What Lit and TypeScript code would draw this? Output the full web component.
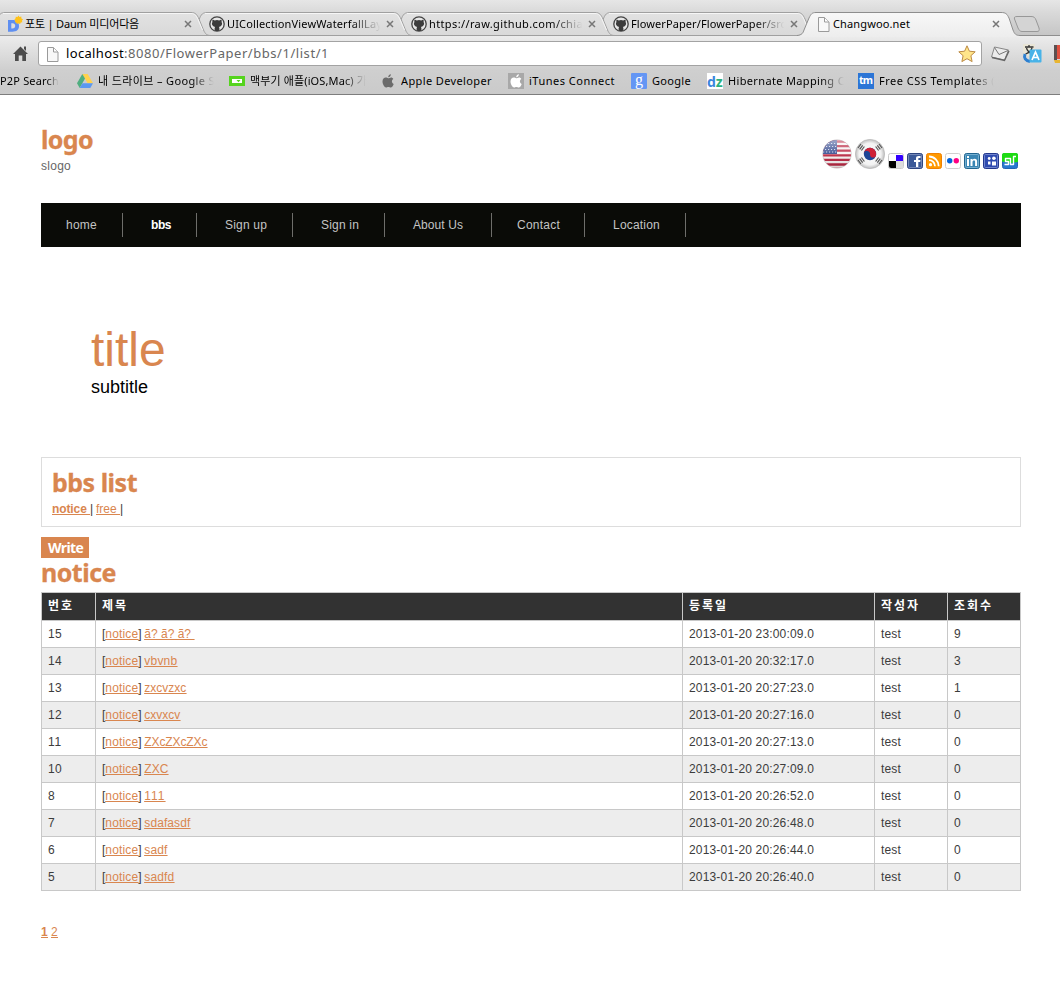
import { LitElement, html, css, svg, nothing } from "lit";
import { customElement, property } from "lit/decorators.js";
import { classMap } from "lit/directives/class-map.js";

/** A run of text tracked so that it fills the given advance width. */
@customElement("fit-text")
class FitText extends LitElement {
  @property({ type: Number }) w = 0;
  @property() text = "";
  static styles = css`
    :host { display: inline-block; white-space: pre; text-decoration: inherit; }
    span { text-decoration: inherit; }
  `;
  firstUpdated() {
    const span = this.renderRoot.querySelector("span")!;
    const natural = span.getBoundingClientRect().width;
    const n = [...this.text].length;
    if (this.w && n) {
      span.style.letterSpacing = `${(this.w - natural) / n}px`;
      this.style.width = `${this.w}px`;
    }
  }
  render() {
    return html`<span>${this.text}</span>`;
  }
}

const t = (text: string, w: number) => html`<fit-text .text=${text} .w=${w}></fit-text>`;

const octocat = svg`<circle cx="8" cy="8" r="7.2" fill="#e6e6e6" stroke="#444" stroke-width="1.3"/>
  <path fill="#3c3c3c" d="M3.6 3.4 5.8 4.4Q8 3.8 10.2 4.4L12.4 3.4Q12.9 4.8 12.6 5.9 13.5 7.3 12.8 9 12 10.7 9.9 10.9 10.4 11.5 10.4 12.4V14.6Q8 15.6 5.6 14.6V12.4Q5.6 11.5 6.1 10.9 4 10.7 3.2 9 2.5 7.3 3.4 5.9 3.1 4.8 3.6 3.4Z"/>`;
const page = svg`<path d="M2.5 1.500h6l4.500 4.500v9.500H2.500z" fill="#f8f8f8" stroke="#9a9a9a"/><path d="M8.500 1.800v4.200h4.300" fill="#fff" stroke="#9a9a9a"/>`;
const apple = svg`<path d="M10.900 1.200c.1 1.500-1.200 3-2.700 3-.1-1.500 1.200-2.900 2.700-3zM13.300 5.900c-2.100 1.300-1.700 4 .4 5-.6 1.700-1.700 3.500-3 3.500-.9 0-1.200-.5-2.300-.5s-1.500.5-2.300.5c-1.600 0-3.600-3.300-3.600-6 0-2.500 1.600-3.900 3.200-3.900 1.100 0 1.900.7 2.600.7s1.600-.8 2.900-.8c.8 0 1.600.5 2.100 1.500z"/>`;

const icons: Record<string, unknown> = {
  daum: svg`<path d="M1 4h4.500c4 0 6.500 2 6.500 6s-2.500 5.700-6.500 5.700H1zM4.300 7.200v5.200h1.200c1.700 0 2.700-.9 2.700-2.600s-1-2.600-2.700-2.600z" fill="#5f8ff0" fill-rule="evenodd"/><path d="m11.500-.5 1 1.500 1.800-.4.1 1.800 1.600.8-1 1.500.3 1.500-1.500.3-.8 1.400-1.500-.7-1.600.8-.7-1.500-1.300-.2.300-1.500-.8-1.400 1.200-1.100.2-1.600 1.600.3z" fill="#ffc21a"/>`,
  octocat,
  page,
  drive: svg`<path d="M5.300 1h5.400L16 10.300h-5.400z" fill="#ffd24d"/><path d="M5.300 1 8 5.600 2.700 15 0 10.300z" fill="#4fae7f"/><path d="M5.400 10.300H16L13.300 15H2.700z" fill="#5b98f0"/>`,
  naver: svg`<path d="M0 3h16v10H0z" fill="#55d41e"/><path d="M3 6h10v4H3z" fill="#fff"/><path d="M7.500 7h4L9.500 9.200z" fill="#55d41e"/>`,
  apple: svg`<g fill="#6b6b6b">${apple}</g>`,
  itunes: svg`<path d="M0 0h16v16H0z" fill="#a8a8a8"/><g fill="#fff">${apple}</g>`,
  google: svg`<rect width="16" height="16" rx="1" fill="#6496f4"/><text x="8" y="11.500" text-anchor="middle" font-family="Liberation Serif, serif" font-size="16" fill="#fff">g</text>`,
  dz: svg`<path d="M0 0h16v16H0z" fill="#fff"/><text x="0" y="14" font-family="Noto Sans, sans-serif" font-weight="700" font-size="14" fill="#3b86dd">d</text><text x="8.700" y="14" font-family="Noto Sans, sans-serif" font-weight="700" font-size="14" fill="#2bb17d">z</text>`,
  tm: svg`<path d="M0 0h16v16H0z" fill="#2b75d6"/><text x="8" y="11" text-anchor="middle" textLength="14" font-family="Noto Sans, sans-serif" font-weight="700" font-size="10.500" fill="#fff">tm</text>`,
  delicious: svg`<rect x=".5" y=".5" width="15" height="15" rx="2" fill="#fff" stroke="#c9c9c9"/><path d="M8 2h6q1 0 1 1v5H8z" fill="#3300ff"/><path d="M1 8h7v7H3q-2 0-2-2z" fill="#000"/><path d="M8 8h7v7H8z" fill="#ddd"/>`,
  facebook: svg`<rect x=".5" y=".5" width="15" height="15" rx="2" fill="#3b5998" stroke="#2d4580"/><rect x="1.500" y="1.500" width="13" height="13" rx="1" fill="none" stroke="#7488b8"/><path d="M9 14V9H7V7h2V5.500C9 3.700 10 3 11.500 3H13.500v2h-1.200c-.8 0-1 .3-1 1v1h2.200l-.3 2h-1.900v5z" fill="#fff"/>`,
  rss: svg`<rect x=".5" y=".5" width="15" height="15" rx="2" fill="#ff9900" stroke="#f08000"/><circle cx="4.500" cy="11.700" r="1.600" fill="#fff"/><path d="M3 7.200a6 6 0 0 1 6 6M3 3.500a9.700 9.700 0 0 1 9.700 9.700" stroke="#fff" stroke-width="1.800" fill="none"/>`,
  flickr: svg`<rect x=".5" y=".5" width="15" height="15" rx="2" fill="#fff" stroke="#cfcfcf"/><circle cx="4.700" cy="7.700" r="2.700" fill="#0063dc"/><circle cx="11.300" cy="7.700" r="2.700" fill="#ff0084"/>`,
  linkedin: svg`<rect x=".5" y=".5" width="15" height="15" rx="2" fill="#3a86b4" stroke="#216590"/><rect x="1.500" y="1.500" width="13" height="13" rx="1" fill="none" stroke="#75afd0"/><path d="M3 6h2v7H3zM3 3h2v2H3zM6.500 6h2v1c.5-.8 1.300-1.200 2.200-1.200 1.700 0 2.400 1 2.400 2.700V13h-2V9c0-.9-.3-1.400-1.100-1.400-1 0-1.500.6-1.500 1.600V13h-2z" fill="#fff"/>`,
  myspace: svg`<rect x=".5" y=".5" width="15" height="15" rx="2" fill="#2f4bb0" stroke="#22378c"/><rect x="1.500" y="1.500" width="13" height="13" rx="1" fill="none" stroke="#7084cc"/><g fill="#fff"><circle cx="6.200" cy="5.500" r="1.400"/><circle cx="10.900" cy="5.200" r="1.800"/><path d="M5 8.500h2.500v3H5zM9 8.500h4v4H9z"/></g>`,
  stumble: svg`<rect x=".5" y=".5" width="15" height="15" rx="2" fill="#2878d0" stroke="#2465b5"/><path d="M2 0h12q2 0 2 2v7L9 10 0 8.500V2q0-2 2-2z" fill="#1ddb12"/><path d="M2.500 11.500H6.500V8.500H3.500V5.500H8.500V11.500H11.500V3.500H14" fill="none" stroke="#fff" stroke-width="1.400" stroke-linejoin="round"/>`,
};

const icon = (name: string, size = 16) =>
  html`<svg class="icon" width=${size} height=${size} viewBox="0 0 16 16">${icons[name]}</svg>`;

interface Tab { icon: string; title: string; w: number; fade?: boolean }
const tabs: Tab[] = [
  { icon: "daum", title: "포토 | Daum 미디어다음", w: 114 },
  { icon: "octocat", title: "UICollectionViewWaterfallLay", w: 155, fade: true },
  { icon: "octocat", title: "https://raw.github.com/chia", w: 154, fade: true },
  { icon: "octocat", title: "FlowerPaper/FlowerPaper/src", w: 155, fade: true },
  { icon: "page", title: "Changwoo.net", w: 77 },
];

interface Bookmark { icon: string; title: string; w: number; cell: number; fade?: boolean }
const bookmarks: Bookmark[] = [
  { icon: "", title: "P2P Search", w: 59, cell: 77, fade: true },
  { icon: "drive", title: "내 드라이브 – Google S", w: 117, cell: 152, fade: true },
  { icon: "naver", title: "맥부기 애플(iOS,Mac) 가", w: 117, cell: 151, fade: true },
  { icon: "apple", title: "Apple Developer", w: 91, cell: 128 },
  { icon: "itunes", title: "iTunes Connect", w: 86, cell: 123 },
  { icon: "google", title: "Google", w: 39, cell: 76 },
  { icon: "dz", title: "Hibernate Mapping C", w: 117, cell: 151, fade: true },
  { icon: "tm", title: "Free CSS Templates (", w: 116, cell: 151, fade: true },
];

const menu = [
  { label: "home", w: 31, cell: 82, pad: 25 },
  { label: "bbs", w: 20, cell: 74, pad: 28, active: true },
  { label: "Sign up", w: 42, cell: 96, pad: 28 },
  { label: "Sign in", w: 38, cell: 92, pad: 28 },
  { label: "About Us", w: 50, cell: 107, pad: 28 },
  { label: "Contact", w: 43, cell: 93, pad: 25 },
  { label: "Location", w: 47, cell: 101, pad: 28 },
];

const rows: [string, string, number, string, string][] = [
  ["15", "ã? ã? ã? ", 50, "23:00:09", "9"],
  ["14", "vbvnb", 33, "20:32:17", "3"],
  ["13", "zxcvzxc", 42, "20:27:23", "1"],
  ["12", "cxvxcv", 36, "20:27:16", "0"],
  ["11", "ZXcZXcZXc", 63, "20:27:13", "0"],
  ["10", "ZXC", 24, "20:27:09", "0"],
  ["8", "111", 21, "20:26:52", "0"],
  ["7", "sdafasdf", 46, "20:26:48", "0"],
  ["6", "sadf", 23, "20:26:44", "0"],
  ["5", "sadfd", 30, "20:26:40", "0"],
];

@customElement("browser-chrome")
class BrowserChrome extends LitElement {
  static styles = css`
    :host {
      display: block; height: 95px; box-sizing: border-box; overflow: hidden;
      border-bottom: 1px solid #7d7d7d; color: #000;
      font: 11px "Noto Sans", "Noto Sans CJK KR", sans-serif;
      background: linear-gradient(#f4f4f4 12px, #ececec 36px, #cfcfcf 70px, #cacaca 94px);
    }
    svg { display: block; flex: none; overflow: visible; }
    .strip { display: grid; height: 36px; }
    .strip > * { grid-area: 1 / 1; }
    .tabs { display: flex; padding-top: 15px; }
    .tab { display: flex; box-sizing: border-box; width: 202px; flex: none; padding-left: 7px; height: 18px; align-items: center; }
    .tab.active { padding-left: 8px; }
    .title { width: 155px; margin-left: 2px; line-height: 18px; overflow: hidden; white-space: nowrap; }
    .tab.active .title { margin-left: 1px; }
    .fade { mask-image: linear-gradient(90deg, #000 80%, transparent 99%); }
    .close { margin-left: 3px; }
    .bar { display: flex; height: 33px; box-sizing: border-box; align-items: center; padding: 2px 0 0 12px; }
    .omni {
      display: flex; flex: none; align-items: center; box-sizing: border-box; width: 944px; height: 25px; margin-left: 9px;
      background: #fff; border: 1px solid #a3a3a3; border-radius: 3px; padding: 0 5px 0 6px;
    }
    .url { flex: 1; margin-left: 5px; font-size: 13px; line-height: 23px; color: #666; white-space: nowrap; }
    .host { color: #000; }
    .ext { margin-left: 8px; }
    .ext + .ext { margin-left: 12px; }
    .marks { display: flex; height: 24px; align-items: center; }
    .mark { display: flex; align-items: center; flex: none; box-sizing: border-box; line-height: 20px; }
    .mark .icon { margin-right: 5px; }
    .label { overflow: hidden; white-space: nowrap; }
  `;
  render() {
    return html`
      <div class="strip">
        <svg width="1060" height="36">
          <defs>
            <linearGradient id="s" x2="0" y2="1"><stop stop-color="#e6e6e6"/><stop offset=".35" stop-color="#d9d9d9"/><stop offset="1" stop-color="#c5c5c5"/></linearGradient>
            <linearGradient id="i" x2="0" y2="1"><stop stop-color="#e2e2e2"/><stop offset="1" stop-color="#d9d9d9"/></linearGradient>
            <linearGradient id="a" x2="0" y2="1"><stop stop-color="#f8f8f8"/><stop offset="1" stop-color="#ededed"/></linearGradient>
          </defs>
          <rect width="1060" height="36" fill="url(#s)"/>
          ${[604, 402, 200, -2].map(
            (x) => svg`<path transform="translate(${x} 0)" d="M-3 35.500L-1 20C1 14 3 12.500 7 12.500H193C198 12.500 199 15 201 19L205.500 30C207.500 34 208.500 35.500 213 35.500" fill="url(#i)" stroke="#a0a0a0"/>
            <path transform="translate(${x} 0)" d="M5 13.500H193C197 13.500 198 15.500 200 19.500L204.500 30" stroke="#f6f6f6" fill="none"/>`
          )}
          <path d="M0 35.500H800" stroke="#a0a0a0"/>
          <path d="M797 36C802 35 803 33 804 30L809 18C811 14 812 12.500 816 12.500H1001C1006 12.500 1007 14 1009 18L1013 30C1014.500 34 1016 35.500 1020 35.500L1020 37H797Z" fill="url(#a)"/>
          <path d="M797 35.500C802 35 803 33 804 30L809 18C811 14 812 12.500 816 12.500H1001C1006 12.500 1007 14 1009 18L1013 30C1014.500 34 1016 35.500 1020 35.500H1060" fill="none" stroke="#8e8e8e"/>
          <path d="M1017 16.500H1031C1034 16.500 1035 17.500 1036 20L1039 28C1039.700 30.500 1039 31.500 1037 31.500H1022C1020 31.500 1019 30 1018 28L1014.500 19C1014 17.500 1014.500 16.500 1017 16.500Z" fill="#d4d4d4" stroke="#989898"/>
        </svg>
        <div class="tabs">
          ${tabs.map(
            (tab, i) => html`<div class=${classMap({ tab: true, active: i === 4 })}>
              ${icon(tab.icon)}
              <div class=${classMap({ title: true, fade: !!tab.fade })}>${t(tab.title, tab.w)}</div>
              <svg class="close" width="10" height="10"><path d="M2 2 8 8M8 2 2 8" stroke="#777" stroke-width="1.500"/></svg>
            </div>`
          )}
        </div>
      </div>
      <div class="bar">
        <svg width="17" height="17"><path d="M8.500 1.500 16 9H14V16H10.300V10.500H6.700V16H3V9H1ZM12 1.500h2v4.500L12 4z" fill="#4c4c4c"/></svg>
        <div class="omni">
          ${icon("page")}
          <div class="url"><span class="host">${t("localhost", 58)}</span>${t(":8080/FlowerPaper/bbs/1/list/1", 205)}</div>
          <svg width="18" height="18"><path d="M9 .8 11.400 6.200 17.200 6.800 12.900 10.700 14.100 16.600 9 13.700 3.900 16.600 5.100 10.700.8 6.800 6.600 6.200Z" fill="#ffe58a" stroke="#bd8b45" stroke-linejoin="round"/></svg>
        </div>
        <svg class="ext" width="20" height="16"><path d="M4.500 1 18.500 4 14.500 14 1.500 11Z" fill="#ececec" stroke="#888" stroke-linejoin="round"/><path d="M4.500 1.500 9 8.500 18 4.500" fill="none" stroke="#777"/><path d="m2 11.500 12.500 3L19 5" fill="none" stroke="#666" stroke-width="1.300"/></svg>
        <svg class="ext" width="20" height="19">
          <path d="M1 0h12v12H1z" fill="#e9e5d6"/><path d="M3 3h8.500M7 1V3M4.500 4q1 4 6 6M10 4Q9 8 3.500 10" stroke="#333" stroke-width="1.300" fill="none"/>
          <path d="M3 10q-2 6 5 7.500" stroke="#2d7fd0" stroke-width="3" fill="none"/><rect x="7.500" y="5.500" width="12" height="13" rx="1" fill="#48b3e8"/>
          <path d="M10 16 13.500 8 17 16M11.200 13.500h4.600" fill="none" stroke="#fff" stroke-width="1.700"/>
        </svg>
        <svg class="ext" width="8" height="18"><path d="M0 0h8v14H0z" fill="#e0503f"/><path d="M0 0h3v15H0z" fill="#5c5050"/><path d="M0 15h8v3H1z" fill="#e8b531"/></svg>
      </div>
      <div class="marks">
        ${bookmarks.map(
          (b) => html`<div class="mark" style="width:${b.cell}px">
            ${b.icon ? icon(b.icon) : nothing}
            <div class=${classMap({ label: true, fade: !!b.fade })}>${t(b.title, b.w)}</div>
          </div>`
        )}
      </div>
    `;
  }
}

@customElement("app-root")
class AppRoot extends LitElement {
  static styles = css`
    :host {
      display: block; height: 984px; overflow: hidden; background: #fff; color: #3c3c3c;
      font: 12px/16px "Liberation Sans", "Noto Sans CJK KR", sans-serif;
    }
    svg { display: block; }
    .page { width: 980px; margin-left: 41px; }
    a { color: #d9864f; text-decoration: underline; }
    b { font-weight: 700; text-decoration: inherit; }
    h1, h2 {
      margin: 0; color: #d9864f; white-space: nowrap;
      font: 700 25px/26px "Noto Sans", sans-serif; height: 30px;
      -webkit-text-stroke: 0.3px #d9864f;
    }
    .head { display: flex; justify-content: space-between; height: 108px; box-sizing: border-box; padding-top: 31px; }
    .slogan { margin-top: 2px; color: #666; }
    .social { display: flex; align-items: flex-end; gap: 3px; height: 43px; padding-right: 3px; }
    .nav { display: flex; align-items: center; height: 44px; background: #0a0b07; color: #c4c4c4; }
    .item { box-sizing: border-box; height: 24px; line-height: 24px; border-right: 1px solid #6e6e6a; }
    .item.active { color: #fff; font-weight: 700; }
    .hero { height: 210px; box-sizing: border-box; padding: 75px 0 0 50px; color: #000; font-size: 18px; line-height: 20px; }
    .hero .big { font-size: 48px; line-height: 56px; height: 55px; color: #d9864f; }
    .box { height: 70px; box-sizing: border-box; border: 1px solid #ddd; padding: 11px 10px 0; }
    .box .cats { margin-top: 2px; white-space: pre; }
    .write {
      display: block; width: 48px; height: 21px; margin: 10px 0 1px; box-sizing: border-box; padding-left: 7px;
      background: #d9864f; color: #fff; font: 700 14px/21px "Open Sans", sans-serif; text-decoration: none;
    }
    .table { margin-top: 3px; border: solid #c8c8c8; border-width: 1px 0 0 1px; }
    .row { display: grid; grid-template-columns: 54px 587px 192px 73px 73px; line-height: 26px; }
    .row > div { border: solid #c8c8c8; border-width: 0 1px 1px 0; padding-left: 6px; white-space: pre; height: 26px; }
    .row:nth-child(odd) { background: #ededed; }
    .row.top { background: #323232; color: #fff; font: 700 12px/24px "Noto Sans CJK KR", sans-serif; }
    .row.top > div { height: 27px; }
    .pager { margin-top: 33px; white-space: pre; }
  `;
  render() {
    return html`
      <browser-chrome></browser-chrome>
      <div class="page">
        <div class="head">
          <div><h1>${t("logo", 52)}</h1><div class="slogan">${t("slogo", 30)}</div></div>
          <div class="social">
            <svg width="30" height="30" viewBox="0 0 30 30">
              <defs><clipPath id="c"><circle cx="15" cy="15" r="14"/></clipPath>
              <linearGradient id="g" x2="0" y2="1"><stop stop-color="#fff" stop-opacity=".55"/><stop offset=".5" stop-color="#fff" stop-opacity=".1"/><stop offset="1" stop-opacity=".15"/></linearGradient></defs>
              <circle cx="15" cy="15" r="14.600" fill="#c9c3c5"/>
              <g clip-path="url(#c)"><path d="M0 0h30v30H0z" fill="#f6f1f1"/><path d="M0 2.500h30M0 7.100h30M0 11.700h30M0 16.300h30M0 20.900h30M0 25.500h30M0 30h30" stroke="#b8203c" stroke-width="2.300"/><path d="M0 0h15v15H0z" fill="#33498f"/><path d="M3 4.500h12M1 7.500h14M3 10.500h12M1 13h14" stroke="#cdd5ea" stroke-dasharray="1.200 1.800"/><path d="M0 0h30v30H0z" fill="url(#g)"/></g>
            </svg>
            <svg width="30" height="30" viewBox="0 0 30 30">
              <defs><radialGradient id="r"><stop stop-color="#fff"/><stop offset=".75" stop-color="#f2f2f2"/><stop offset="1" stop-color="#bdbdbd"/></radialGradient></defs>
              <circle cx="15" cy="15" r="14.600" fill="url(#r)" stroke="#bbb" stroke-width=".8"/>
              <circle cx="15" cy="15" r="6.200" fill="#1d4596"/><path d="M8.800 14.500a6.200 6.200 0 0 1 12.400 1 3.100 3.100 0 0 1-6.200 0 3.100 3.100 0 0 0-6.200-1z" fill="#cf2136"/>
              <g stroke="#555" stroke-width="1.200"><path d="m3 9 3-4M4.700 10.300l3-4M6.400 11.500l3-4M24 5l3 4M22.300 6.300l3 4M20.600 7.500l3 4M3 21l3 4M4.700 19.700l3 4M6.400 18.500l3 4M24 25l3-4M22.300 23.700l3-4M20.600 22.500l3-4"/></g>
            </svg>
            ${["delicious", "facebook", "rss", "flickr", "linkedin", "myspace", "stumble"].map((n) => icon(n))}
          </div>
        </div>
        <div class="nav">
          ${menu.map(
            (m) => html`<div class=${classMap({ item: true, active: !!m.active })} style="width:${m.cell}px;padding-left:${m.pad}px">${t(m.label, m.w)}</div>`
          )}
        </div>
        <div class="hero"><div class="big">title</div>subtitle</div>
        <div class="box">
          <h2>${t("bbs list", 85)}</h2>
          <div class="cats"><a><b>${t("notice ", 38)}</b></a>${t("| ", 6)}<a>${t("free ", 24)}</a>|</div>
        </div>
        <a class="write">${t("Write", 35)}</a>
        <h2>${t("notice", 75)}</h2>
        <div class="table">
          <div class="row top">
            <div>${t("번호", 26)}</div><div>${t("제목", 26)}</div><div>${t("등록일", 39)}</div><div>${t("작성자", 39)}</div><div>${t("조회수", 39)}</div>
          </div>
          ${rows.map(
            ([no, title, w, time, hits]) => html`<div class="row">
              <div>${t(no, no.length * 7)}</div>
              <div>[<a>${t("notice", 33)}</a>${t("] ", 6)}<a>${t(title, w)}</a></div>
              <div>${t(`2013-01-20 ${time}.0`, 125)}</div>
              <div>${t("test", 20)}</div>
              <div>${t(hits, 7)}</div>
            </div>`
          )}
        </div>
        <div class="pager"><a><b>${t("1", 7)}</b></a>${t(" ", 3)}<a>${t("2", 7)}</a></div>
      </div>
    `;
  }
}
